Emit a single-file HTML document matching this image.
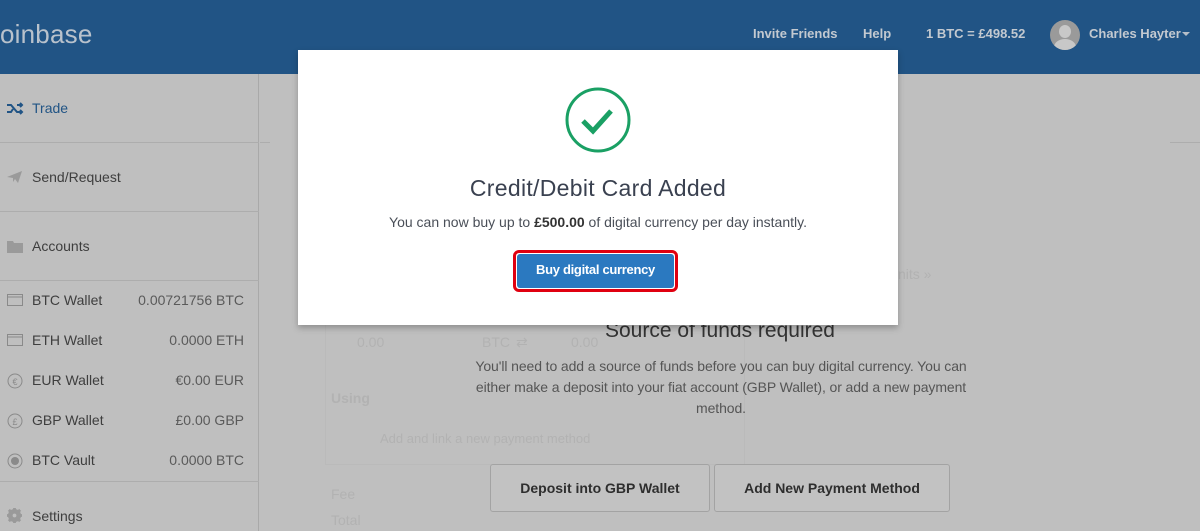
<!DOCTYPE html>
<html><head><meta charset="utf-8"><style>
*{margin:0;padding:0;box-sizing:border-box}
body{width:1200px;height:531px;overflow:hidden;background:#bfbfbf;font-family:"Liberation Sans",Arial,sans-serif;position:relative}
.hdr{position:absolute;left:0;top:0;width:1200px;height:74px;background:#215485}
.logo{position:absolute;left:0;top:19px;font-size:26px;color:#b9c2cc;letter-spacing:0.2px}
.nav{position:absolute;top:26px;font-size:13px;font-weight:bold;color:#c3c9d0}
.av{position:absolute;left:1050px;top:20px;width:30px;height:30px;border-radius:50%;background:#9a9a9a;overflow:hidden}
.side{position:absolute;left:0;top:74px;width:259px;height:457px;border-right:1px solid #a9a9a9}
.it{position:absolute;left:32px;font-size:14px;color:#3e3e3e}
.hl{position:absolute;left:0;width:259px;height:1px;background:#adadad}
.wl{position:absolute;left:32px;font-size:14px;color:#3e3e3e}
.wv{position:absolute;right:14px;font-size:14px;color:#5a5a5a;text-align:right}
.ic{position:absolute;left:7px}
.faint{position:absolute;color:#b2b2b2;font-size:14px}
.modal{position:absolute;left:298px;top:50px;width:600px;height:275px;background:#fff;box-shadow:0 3px 6px rgba(0,0,0,.25)}
.btn2{position:absolute;top:464px;height:48px;border:1px solid #a3a3a3;border-radius:3px;font-size:14px;font-weight:bold;color:#2e2e2e;text-align:center;line-height:46px;background:#c2c2c2}
</style></head><body>
<div class="hdr">
<div class="logo">oinbase</div>
<div class="nav" style="left:753px">Invite Friends</div>
<div class="nav" style="left:863px">Help</div>
<div class="nav" style="left:926px">1 BTC = £498.52</div>
<div class="av"><div style="position:absolute;left:9px;top:5px;width:12px;height:13px;border-radius:50%;background:#c8c8c8"></div><div style="position:absolute;left:4px;top:19px;width:22px;height:16px;border-radius:50%;background:#c8c8c8"></div></div>
<div class="nav" style="left:1089px">Charles Hayter</div>
<div style="position:absolute;left:1182px;top:32px;border-left:4px solid transparent;border-right:4px solid transparent;border-top:4px solid #b6bec8"></div>
</div>
<div class="side">
<svg class="ic" style="top:28px" width="17" height="13" viewBox="0 0 17 13"><path d="M0 3h4l6 7h5M0 10h4l2-3M10 3h5M13 1l2 2-2 2M13 8l2 2-2 2" stroke="#215485" stroke-width="2" fill="none"/></svg>
<div class="it" style="top:26px;color:#215485">Trade</div>
<div class="hl" style="top:68px"></div>
<svg class="ic" style="top:96px" width="16" height="14" viewBox="0 0 16 14"><path d="M0 7L15 1 11 13 8 9 6 12 6 8Z" fill="#9a9a9a"/></svg>
<div class="it" style="top:95px">Send/Request</div>
<div class="hl" style="top:137px"></div>
<svg class="ic" style="top:166px" width="16" height="13" viewBox="0 0 16 13"><path d="M0 1h6l1 2h9v10H0Z" fill="#9a9a9a"/></svg>
<div class="it" style="top:164px">Accounts</div>
<div class="hl" style="top:206px"></div>
<svg class="ic" style="top:220px" width="16" height="12"><rect x=".5" y=".5" width="15" height="11" fill="none" stroke="#8a8a8a"/><line x1="0" y1="3" x2="16" y2="3" stroke="#8a8a8a"/></svg>
<div class="wl" style="top:218px">BTC Wallet</div><div class="wv" style="top:218px">0.00721756 BTC</div>
<svg class="ic" style="top:260px" width="16" height="12"><rect x=".5" y=".5" width="15" height="11" fill="none" stroke="#8a8a8a"/><line x1="0" y1="3" x2="16" y2="3" stroke="#8a8a8a"/></svg>
<div class="wl" style="top:258px">ETH Wallet</div><div class="wv" style="top:258px">0.0000 ETH</div>
<svg class="ic" style="top:299px" width="16" height="16"><circle cx="8" cy="8" r="7" fill="none" stroke="#8a8a8a"/><text x="8" y="12" font-size="9" text-anchor="middle" fill="#8a8a8a" font-family="Liberation Sans">€</text></svg>
<div class="wl" style="top:298px">EUR Wallet</div><div class="wv" style="top:298px">€0.00 EUR</div>
<svg class="ic" style="top:339px" width="16" height="16"><circle cx="8" cy="8" r="7" fill="none" stroke="#8a8a8a"/><text x="8" y="12" font-size="9" text-anchor="middle" fill="#8a8a8a" font-family="Liberation Sans">£</text></svg>
<div class="wl" style="top:338px">GBP Wallet</div><div class="wv" style="top:338px">£0.00 GBP</div>
<svg class="ic" style="top:379px" width="16" height="16"><circle cx="8" cy="8" r="7" fill="none" stroke="#8a8a8a"/><circle cx="8" cy="8" r="4" fill="#8a8a8a"/></svg>
<div class="wl" style="top:378px">BTC Vault</div><div class="wv" style="top:378px">0.0000 BTC</div>
<div class="hl" style="top:407px"></div>
<svg class="ic" style="top:434px" width="15" height="15" viewBox="0 0 16 16"><circle cx="8" cy="8" r="5" fill="none" stroke="#9a9a9a" stroke-width="4"/><path d="M8 0v16M0 8h16M2 2l12 12M14 2L2 14" stroke="#9a9a9a" stroke-width="3"/><circle cx="8" cy="8" r="2" fill="#bfbfbf"/></svg>
<div class="it" style="top:434px">Settings</div>
</div>
<div style="position:absolute;left:260px;top:142px;width:10px;height:1px;background:#adadad"></div>
<div style="position:absolute;left:1170px;top:142px;width:30px;height:1px;background:#adadad"></div>
<div class="faint" style="left:898px;top:266px">nits »</div>
<div style="position:absolute;left:325px;top:325px;width:420px;height:140px;border:1px solid #bababa;border-top:none"></div>
<div class="faint" style="left:357px;top:334px">0.00</div><div class="faint" style="left:482px;top:334px">BTC</div><div class="faint" style="left:516px;top:334px">⇄</div><div class="faint" style="left:571px;top:334px">0.00</div>
<div class="faint" style="left:331px;top:390px;font-weight:bold">Using</div>
<div class="faint" style="left:380px;top:431px;font-size:13px">Add and link a new payment method</div>
<div class="faint" style="left:331px;top:486px">Fee</div><div class="faint" style="left:331px;top:512px">Total</div>
<div style="position:absolute;left:440px;top:319px;width:560px;text-align:center;font-size:21px;color:#333">Source of funds required</div>
<div style="position:absolute;left:474px;top:356px;width:494px;text-align:center;font-size:14px;line-height:21px;color:#555;letter-spacing:-0.1px">You'll need to add a source of funds before you can buy digital currency. You can either make a deposit into your fiat account (GBP Wallet), or add a new payment method.</div>
<div class="btn2" style="left:490px;width:220px">Deposit into GBP Wallet</div>
<div class="btn2" style="left:714px;width:236px">Add New Payment Method</div>
<div class="modal">
<svg style="position:absolute;left:267px;top:37px" width="66" height="66"><circle cx="33" cy="33" r="31" fill="none" stroke="#1aa064" stroke-width="3"/><path d="M18 34l10 10 18-20" fill="none" stroke="#1aa064" stroke-width="5"/></svg>
<div style="position:absolute;left:0;top:125px;width:600px;text-align:center;font-size:23px;color:#3a4150;letter-spacing:0.3px">Credit/Debit Card Added</div>
<div style="position:absolute;left:0;top:164px;width:600px;text-align:center;font-size:14px;color:#4a4f58">You can now buy up to <b style="color:#333">£500.00</b> of digital currency per day instantly.</div>
<div style="position:absolute;left:215px;top:200px;width:165px;height:42px;border:3px solid #e00010;border-radius:6px;padding:1px"><div style="width:100%;height:100%;background:#2b79c0;border-radius:3px;color:#fff;font-size:13px;font-weight:bold;text-align:center;line-height:32px;letter-spacing:-0.3px">Buy digital currency</div></div>
</div>
</body></html>
